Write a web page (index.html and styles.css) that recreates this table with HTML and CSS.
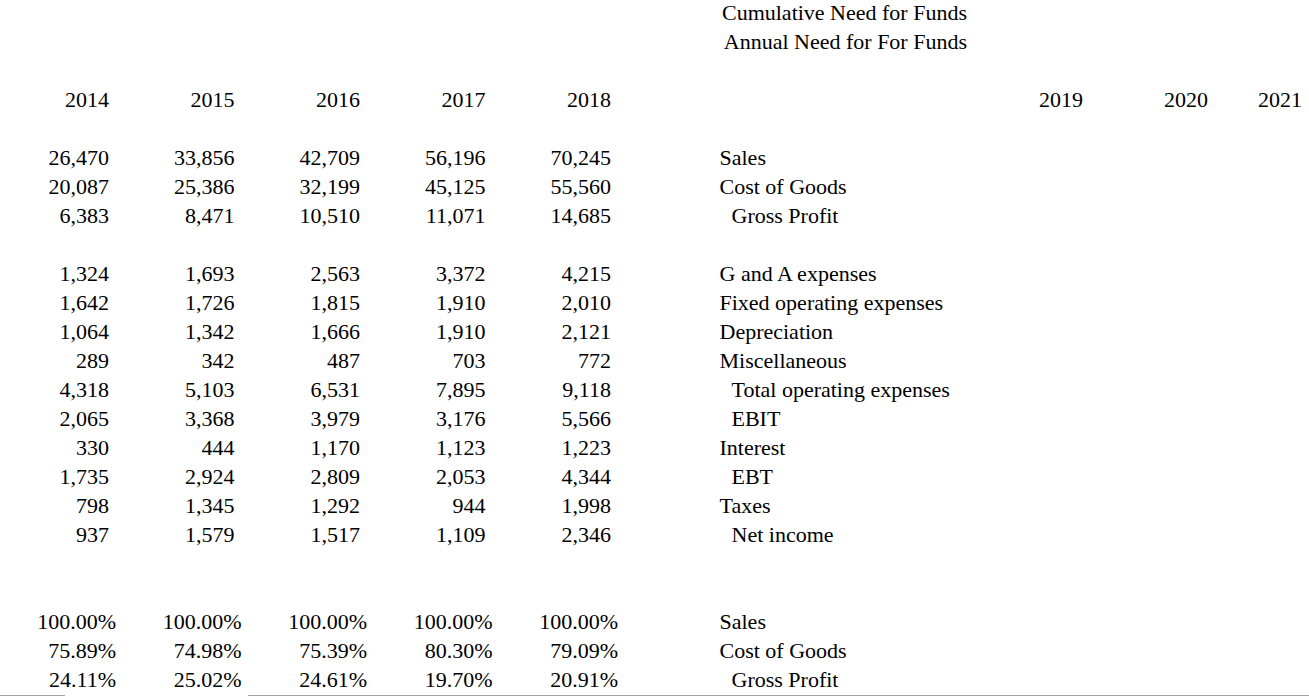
FILE: index.html
```html
<!DOCTYPE html>
<html lang="en">
<head>
<meta charset="utf-8">
<title>Cumulative Need for Funds</title>
<link rel="stylesheet" href="styles.css">
</head>
<body>
<div class="sheet">
<table class="grid">
  <colgroup>
    <col class="c1"><col class="c2"><col class="c2"><col class="c2"><col class="c2">
    <col class="c6"><col class="c7"><col class="c8"><col class="c9"><col class="c10">
  </colgroup>
  <tbody>
    <tr><td></td><td></td><td></td><td></td><td></td><td></td><td class="title">Cumulative Need for Funds</td><td></td><td></td><td></td></tr>
    <tr><td></td><td></td><td></td><td></td><td></td><td></td><td class="title">Annual Need for For Funds</td><td></td><td></td><td></td></tr>
    <tr><td colspan="10"></td></tr>
    <tr><td class="n">2014</td><td class="n">2015</td><td class="n">2016</td><td class="n">2017</td><td class="n">2018</td><td></td><td></td><td class="y">2019</td><td class="y">2020</td><td class="y">2021</td></tr>
    <tr><td colspan="10"></td></tr>
    <tr><td class="n">26,470</td><td class="n">33,856</td><td class="n">42,709</td><td class="n">56,196</td><td class="n">70,245</td><td></td><td class="lbl">Sales</td><td></td><td></td><td></td></tr>
    <tr><td class="n">20,087</td><td class="n">25,386</td><td class="n">32,199</td><td class="n">45,125</td><td class="n">55,560</td><td></td><td class="lbl">Cost of Goods</td><td></td><td></td><td></td></tr>
    <tr><td class="n">6,383</td><td class="n">8,471</td><td class="n">10,510</td><td class="n">11,071</td><td class="n">14,685</td><td></td><td class="lbl sub">Gross Profit</td><td></td><td></td><td></td></tr>
    <tr><td colspan="10"></td></tr>
    <tr><td class="n">1,324</td><td class="n">1,693</td><td class="n">2,563</td><td class="n">3,372</td><td class="n">4,215</td><td></td><td class="lbl">G and A expenses</td><td></td><td></td><td></td></tr>
    <tr><td class="n">1,642</td><td class="n">1,726</td><td class="n">1,815</td><td class="n">1,910</td><td class="n">2,010</td><td></td><td class="lbl">Fixed operating expenses</td><td></td><td></td><td></td></tr>
    <tr><td class="n">1,064</td><td class="n">1,342</td><td class="n">1,666</td><td class="n">1,910</td><td class="n">2,121</td><td></td><td class="lbl">Depreciation</td><td></td><td></td><td></td></tr>
    <tr><td class="n">289</td><td class="n">342</td><td class="n">487</td><td class="n">703</td><td class="n">772</td><td></td><td class="lbl">Miscellaneous</td><td></td><td></td><td></td></tr>
    <tr><td class="n">4,318</td><td class="n">5,103</td><td class="n">6,531</td><td class="n">7,895</td><td class="n">9,118</td><td></td><td class="lbl sub">Total operating expenses</td><td></td><td></td><td></td></tr>
    <tr><td class="n">2,065</td><td class="n">3,368</td><td class="n">3,979</td><td class="n">3,176</td><td class="n">5,566</td><td></td><td class="lbl sub">EBIT</td><td></td><td></td><td></td></tr>
    <tr><td class="n">330</td><td class="n">444</td><td class="n">1,170</td><td class="n">1,123</td><td class="n">1,223</td><td></td><td class="lbl">Interest</td><td></td><td></td><td></td></tr>
    <tr><td class="n">1,735</td><td class="n">2,924</td><td class="n">2,809</td><td class="n">2,053</td><td class="n">4,344</td><td></td><td class="lbl sub">EBT</td><td></td><td></td><td></td></tr>
    <tr><td class="n">798</td><td class="n">1,345</td><td class="n">1,292</td><td class="n">944</td><td class="n">1,998</td><td></td><td class="lbl">Taxes</td><td></td><td></td><td></td></tr>
    <tr><td class="n">937</td><td class="n">1,579</td><td class="n">1,517</td><td class="n">1,109</td><td class="n">2,346</td><td></td><td class="lbl sub">Net income</td><td></td><td></td><td></td></tr>
    <tr><td colspan="10"></td></tr>
    <tr><td colspan="10"></td></tr>
    <tr><td class="p">100.00%</td><td class="p">100.00%</td><td class="p">100.00%</td><td class="p">100.00%</td><td class="p">100.00%</td><td></td><td class="lbl">Sales</td><td></td><td></td><td></td></tr>
    <tr><td class="p">75.89%</td><td class="p">74.98%</td><td class="p">75.39%</td><td class="p">80.30%</td><td class="p">79.09%</td><td></td><td class="lbl">Cost of Goods</td><td></td><td></td><td></td></tr>
    <tr><td class="p">24.11%</td><td class="p">25.02%</td><td class="p">24.61%</td><td class="p">19.70%</td><td class="p">20.91%</td><td></td><td class="lbl sub">Gross Profit</td><td></td><td></td><td></td></tr>
  </tbody>
</table>
<div class="rule">
  <span class="rule-a"></span>
  <span class="rule-gap"></span>
  <span class="rule-b"></span>
</div>
</div>
</body>
</html>
```

FILE: styles.css
```css
html, body {
  margin: 0;
  padding: 0;
  background: #ffffff;
}

body {
  width: 1309px;
  height: 697px;
  overflow: hidden;
  font-family: "Liberation Serif", "Times New Roman", serif;
  font-size: 22px;
  color: #000000;
}

.sheet {
  margin-top: -2px;
}

.grid {
  table-layout: fixed;
  border-collapse: collapse;
  border-spacing: 0;
  width: 1305px;
}

.c1 { width: 119px; }
.c2 { width: 125.5px; }
.c6 { width: 96px; }
.c7 { width: 253px; }
.c8 { width: 116px; }
.c9 { width: 125px; }
.c10 { width: 94px; }

.grid td {
  height: 29px;
  padding: 0 3px;
  line-height: 29px;
  white-space: nowrap;
  vertical-align: middle;
  overflow: visible;
}

.grid td.n {
  text-align: right;
  padding-right: 10px;
}

.grid td.p {
  text-align: right;
}

.grid td.y {
  text-align: right;
}

.grid td.title {
  text-align: right;
}

.grid td.lbl {
  text-align: left;
  padding-left: 2.5px;
}

.grid td.lbl.sub {
  padding-left: 14.5px;
}

.rule {
  display: flex;
  margin-top: 1px;
  height: 1px;
}

.rule-a {
  width: 65px;
  background: #a0a0a0;
}

.rule-gap {
  width: 183px;
}

.rule-b {
  flex: 1;
  background: #a0a0a0;
}
```
